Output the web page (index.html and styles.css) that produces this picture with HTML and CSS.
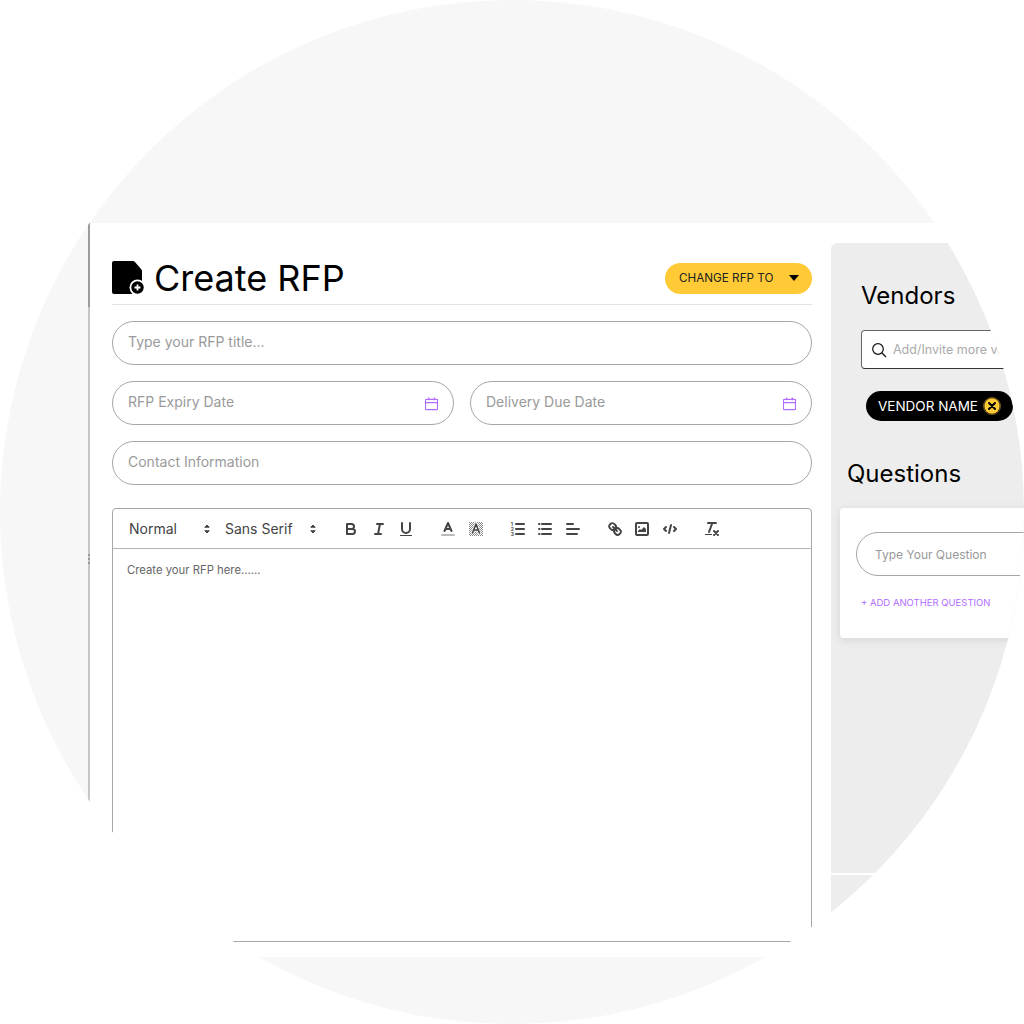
FILE: index.html
```html
<!DOCTYPE html>
<html lang="en">
<head>
    <meta charset="UTF-8">
    <meta name="viewport" content="width=device-width, initial-scale=1.0">
    <title>Create RFP</title>
    <link rel="stylesheet" href="styles.css">
</head>
<body>
    <div class="disc">
        <div class="sheet">
            <main class="form">
                <header class="form-head">
                    <svg class="doc-icon" viewBox="0 0 33 34">
                        <path d="M2 0h19q1 0 2 1l6 7q1 1 1 2v21q0 2-2 2H2q-2 0-2-2V2q0-2 2-2z" fill="#000"/>
                        <circle cx="25.500" cy="26.500" r="8" fill="#fff"/>
                        <circle cx="25.500" cy="26.500" r="6.200" fill="#000"/>
                        <path d="M22.500 26.500h6M25.500 23.500v6" stroke="#fff" stroke-width="1.800"/>
                    </svg>
                    <h1>Create RFP</h1>
                    <div class="change-btn">
                        <span>CHANGE RFP TO</span>
                        <i class="caret"></i>
                    </div>
                </header>

                <div class="field"><span>Type your RFP title...</span></div>
                <div class="date-row">
                    <div class="field">
                        <span>RFP Expiry Date</span>
                        <svg class="cal" viewBox="0 0 14 15"><path d="M1.500 3h11a1 1 0 0 1 1 1v9a1 1 0 0 1-1 1h-11a1 1 0 0 1-1-1V4a1 1 0 0 1 1-1zM.5 6.500h13M4 1v3M10 1v3"/></svg>
                    </div>
                    <div class="field">
                        <span>Delivery Due Date</span>
                        <svg class="cal" viewBox="0 0 14 15"><path d="M1.500 3h11a1 1 0 0 1 1 1v9a1 1 0 0 1-1 1h-11a1 1 0 0 1-1-1V4a1 1 0 0 1 1-1zM.5 6.500h13M4 1v3M10 1v3"/></svg>
                    </div>
                </div>
                <div class="field"><span>Contact Information</span></div>

                <section class="editor">
                    <div class="toolbar">
                        <div class="picker picker-size">
                            <span>Normal</span>
                            <svg class="ic" viewBox="0 0 18 18"><path class="arrows" d="M7 11l2 2 2-2zM7 7l2-2 2 2z"/></svg>
                        </div>
                        <div class="picker picker-font">
                            <span>Sans Serif</span>
                            <svg class="ic" viewBox="0 0 18 18"><path class="arrows" d="M7 11l2 2 2-2zM7 7l2-2 2 2z"/></svg>
                        </div>
                        <div class="tool-group">
                            <svg class="ic" viewBox="0 0 18 18"><path d="M5 4h4.500a2.500 2.500 0 0 1 0 5H5zM5 9h5.500a2.500 2.500 0 0 1 0 5H5z"/></svg>
                            <svg class="ic" viewBox="0 0 18 18"><path d="M7 4h6M5 14h6M8 14l2-10"/></svg>
                            <svg class="ic" viewBox="0 0 18 18"><path d="M5 3v6a4 4 0 0 0 4 4 4 4 0 0 0 4-4V3"/><rect class="fill" x="3" y="15" width="12" height="1"/></svg>
                        </div>
                        <div class="tool-group">
                            <svg class="ic" viewBox="0 0 18 18"><path class="label" d="M3 15h12"/><path d="M5.500 11L9 3l3.500 8M11.600 9H6.400"/></svg>
                            <svg class="ic" viewBox="0 0 18 18">
                                <defs>
                                    <pattern id="hatch" width="2" height="2" patternUnits="userSpaceOnUse"><rect class="dither" width="1" height="1"/><rect class="dither" x="1" y="1" width="1" height="1"/></pattern>
                                </defs>
                                <rect class="hatch-bg" x="2" y="2" width="14" height="14" fill="url(#hatch)"/>
                                <path class="halo" d="M5.500 13L9 4l3.500 9M11.600 10H6.400"/>
                                <path d="M5.500 13L9 4l3.500 9M11.600 10H6.400" stroke-width="1.600"/>
                            </svg>
                        </div>
                        <div class="tool-group">
                            <svg class="ic" viewBox="0 0 18 18"><path d="M7 4h8M7 9h8M7 14h8"/><text class="nums" x="1.800" y="6">1</text><text class="nums" x="1.800" y="11">2</text><text class="nums" x="1.800" y="16">3</text></svg>
                            <svg class="ic" viewBox="0 0 18 18"><path d="M6 4h9M6 9h9M6 14h9M3 4h.5M3 9h.5M3 14h.5"/></svg>
                            <svg class="ic" viewBox="0 0 18 18"><path d="M3 9h12M3 14h10M3 4h6"/></svg>
                        </div>
                        <div class="tool-group">
                            <svg class="ic" viewBox="0 0 18 18"><path d="M7 7l4 4M8.900 4.577a3.476 3.476 0 0 1 .36 4.679A3.476 3.476 0 0 1 4.577 8.900C3.185 7.500 2.035 6.400 4.217 4.217S7.500 3.185 8.900 4.577zM13.423 9.100a3.476 3.476 0 0 0-4.679-.36 3.476 3.476 0 0 0 .36 4.679c1.392 1.392 2.500 2.542 4.679.36s1.055-3.279-.36-4.679z"/></svg>
                            <svg class="ic" viewBox="0 0 18 18"><rect x="3" y="3" width="12" height="12" rx="1"/><circle class="fill" cx="6" cy="7" r="1"/><path class="fill" d="M5 12v-1l2-2 1 1 3-3 2 2v3z"/></svg>
                            <svg class="ic" viewBox="0 0 18 18"><path d="M5 7L3 9l2 2M13 7l2 2-2 2M10 5l-2 8"/></svg>
                        </div>
                        <div class="tool-group">
                            <svg class="ic" viewBox="0 0 18 18"><path d="M5 3h8M6 12l3.350-9M11 11l4 4M15 11l-4 4"/><rect class="fill" x="2" y="14" width="7" height="1"/></svg>
                        </div>
                    </div>
                    <p class="editor-body">Create your RFP here......</p>
                </section>
            </main>

            <aside class="side">
                <section class="side-top">
                    <h2 class="vendors-title">Vendors</h2>
                    <div class="search">
                        <svg class="search-icon" viewBox="0 0 16 16"><circle cx="7" cy="7" r="5.300"/><path d="M11 11l4 4"/></svg>
                        <span class="search-text">Add/Invite more vendors</span>
                    </div>
                    <div class="vendor-pill">
                        <span>VENDOR NAME</span>
                        <svg class="pill-x" viewBox="0 0 18 18">
                            <circle cx="9" cy="9" r="8.500" fill="none" stroke="#a8842a" stroke-width=".7"/>
                            <circle cx="9" cy="9" r="7.700" fill="#ffca35"/>
                            <path d="M6 6l6 6M12 6l-6 6" stroke="#000" stroke-width="2" stroke-linecap="round"/>
                        </svg>
                    </div>
                    <h2 class="questions-title">Questions</h2>
                    <div class="q-card">
                        <div class="q-field"><span>Type Your Question</span></div>
                        <div class="add-link">+ ADD ANOTHER QUESTION</div>
                    </div>
                </section>
                <section class="side-bottom"></section>
            </aside>
        </div>
    </div>
</body>
</html>
```

FILE: styles.css
```css
* {
    box-sizing: border-box;
}
body {
    margin: 0;
    background-color: white;
    font-family: 'Inter', 'Liberation Sans', sans-serif;
}
.disc {
    width: 1024px;
    height: 1024px;
    padding: 223px 0 0 88px;
    border-radius: 50%;
    overflow: hidden;
    background-color: #f7f7f7;
}
.sheet {
    display: flex;
    height: 734px;
    background-color: white;
    border-left: 2px solid #b4b4b4;
    border-image: linear-gradient(#9c9c9c 85px, #c6c6c6 85px, #c6c6c6 331px, #999 331px, #999 333px, #c6c6c6 333px, #c6c6c6 335px, #999 335px, #999 337px, #c6c6c6 337px, #c6c6c6 339px, #999 339px, #999 341px, #c6c6c6 341px) 1;
}
.form {
    flex: none;
    width: 741px;
    padding: 34px 19px 0 22px;
}
.form-head {
    display: flex;
    align-items: center;
    height: 42px;
    padding-bottom: 5px;
    margin-bottom: 16px;
    border-bottom: 1px solid #e2e2e2;
    box-sizing: content-box;
}
.doc-icon {
    width: 33px;
    height: 34px;
    margin-right: 9px;
}
h1 {
    flex: 1;
    margin: 0;
    font-size: 36px;
    font-weight: 400;
    color: #000;
}
.change-btn {
    display: flex;
    align-items: center;
    justify-content: space-between;
    width: 147px;
    height: 31px;
    padding: 0 13px 0 14px;
    border-radius: 16px;
    background-color: #ffca35;
    font-size: 11.700px;
    color: #222;
}
.caret {
    width: 0;
    height: 0;
    border-left: 5.500px solid transparent;
    border-right: 5.500px solid transparent;
    border-top: 6px solid #000;
}
.field {
    display: flex;
    align-items: center;
    justify-content: space-between;
    flex: 1;
    height: 44px;
    margin-bottom: 16px;
    padding: 0 15px 3px 15px;
    border: 1px solid #a6a6a6;
    border-radius: 22px;
    font-size: 14px;
    color: #9a9a9a;
}
.date-row {
    display: flex;
    gap: 16px;
}
.cal {
    width: 13px;
    height: 15px;
    margin-top: 3px;
    fill: none;
    stroke: #b06cff;
    stroke-width: 1.300;
}
.editor {
    height: 434px;
    margin-top: 23px;
    border: 1px solid #a6a6a6;
    border-radius: 4px 4px 0 0;
}
.toolbar {
    display: flex;
    align-items: center;
    height: 40px;
    padding-left: 16px;
    border-bottom: 1px solid #b4b4b4;
    font-size: 14px;
    color: #444;
}
.picker {
    display: flex;
    align-items: center;
    justify-content: space-between;
}
.picker-size {
    width: 87px;
    margin-right: 9px;
}
.picker-font {
    width: 97px;
    margin-right: 20px;
}
.tool-group {
    display: flex;
    gap: 9.500px;
    margin-right: 24px;
}
.ic {
    flex: none;
    width: 18px;
    height: 18px;
    fill: none;
    stroke: #444;
    stroke-width: 2;
    stroke-linecap: round;
    stroke-linejoin: round;
}
.ic .fill {
    fill: #444;
    stroke: none;
}
.ic .dither {
    fill: #8a8a8a;
    stroke: none;
}
.ic .arrows {
    fill: #444;
    stroke-width: 1;
}
.ic .label {
    stroke: #bbb;
}
.ic .hatch-bg {
    stroke: none;
}
.ic .halo {
    stroke: white;
    stroke-width: 3;
}
.ic .nums {
    font-size: 5px;
    font-weight: 700;
    fill: #444;
    stroke: none;
}
.editor-body {
    margin: 0;
    padding: 14px 14px;
    font-size: 11.300px;
    color: #666;
}
.side {
    flex: 1;
    padding-top: 20px;
    min-width: 0;
}
.side-top {
    height: 630px;
    padding-top: 36px;
    background-color: #ededed;
    border-top-left-radius: 6px;
}
.side-bottom {
    height: 100px;
    margin-top: 2px;
    background-color: #ededed;
}
h2 {
    margin: 0;
    font-size: 24px;
    font-weight: 400;
    color: #000;
}
.vendors-title {
    margin-left: 30px;
    line-height: 34px;
}
.search {
    display: flex;
    align-items: center;
    width: 170px;
    height: 39px;
    margin: 17px 0 0 30px;
    padding-left: 9px;
    background-color: white;
    border: 1px solid #666;
    border-bottom-color: #333;
    border-radius: 4px;
}
.search-icon {
    flex: none;
    width: 16px;
    height: 16px;
    margin-right: 6px;
    fill: none;
    stroke: #111;
    stroke-width: 1.200;
}
.search-text {
    width: 106px;
    overflow: hidden;
    white-space: nowrap;
    font-size: 12.500px;
    color: #aaa;
}
.vendor-pill {
    display: flex;
    align-items: center;
    gap: 5px;
    width: 147px;
    height: 30px;
    margin: 22px 0 0 35px;
    padding-left: 12px;
    border-radius: 15px;
    background-color: #000;
    font-size: 13.500px;
    color: white;
    white-space: nowrap;
}
.pill-x {
    flex: none;
    width: 18px;
    height: 18px;
}
.questions-title {
    margin: 36px 0 0 16px;
    line-height: 34px;
}
.q-card {
    width: 220px;
    height: 130px;
    margin: 17px 0 0 9px;
    padding: 24px 0 0 16px;
    background-color: white;
    border-radius: 4px;
    box-shadow: 0 2px 10px rgba(0,0,0,0.1);
}
.q-field {
    display: flex;
    align-items: center;
    height: 44px;
    padding-left: 18px;
    border: 1px solid #a6a6a6;
    border-radius: 22px;
    font-size: 12px;
    color: #999;
}
.add-link {
    margin: 21px 0 0 5px;
    font-size: 9.500px;
    color: #b06cff;
    white-space: nowrap;
}
```
